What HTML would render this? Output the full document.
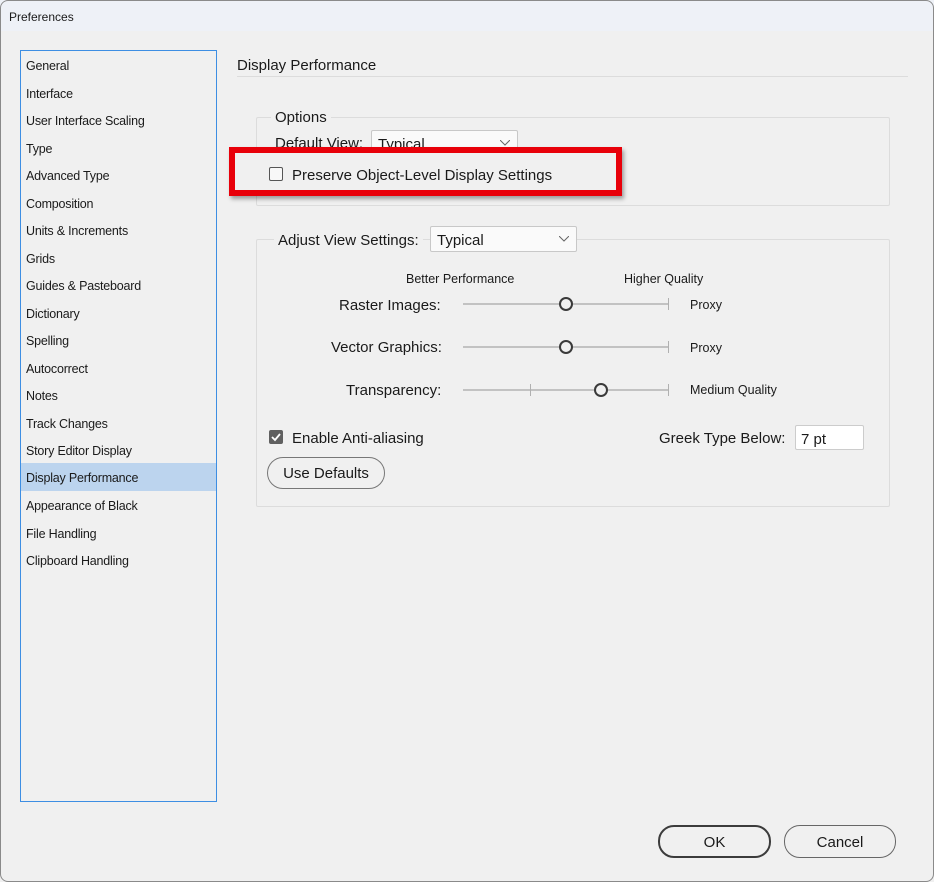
<!DOCTYPE html>
<html><head><style>
*{margin:0;padding:0;box-sizing:border-box}
body{width:934px;height:882px;background:#f0f0f0;font-family:"Liberation Sans",sans-serif;color:#1a1a1a;position:relative;overflow:hidden}
.win{position:absolute;left:0;top:0;width:934px;height:882px;background:#f0f0f0;overflow:hidden}
.frame{position:absolute;left:0;top:0;width:934px;height:882px;border:1px solid #8a8a8a;border-radius:8px;pointer-events:none}
.title{position:absolute;left:0;top:0;width:100%;height:31px;background:#eef1f7;font-size:12px;padding:10px 0 0 9px}
.a{position:absolute;white-space:nowrap}
.t{margin-top:1px}
.list{position:absolute;left:20px;top:50px;width:197px;height:752px;border:1px solid #3d8ee3;background:#f0f0f0}
.it{position:absolute;left:0;width:195px;height:27.5px;font-size:12.5px;line-height:27.5px;padding-left:5px;letter-spacing:-0.2px;padding-top:2px}
.sel{background:#bcd4ee}
.box{position:absolute;border:1px solid #dcdcdc;border-radius:2px}
.lg{position:absolute;background:#f0f0f0;padding:1px 4px 0;font-size:15px}
.dd{position:absolute;background:#fafafa;border:1px solid #c8c8c8;border-radius:2px;font-size:15px;padding:5px 0 0 6px}
.dd svg{position:absolute;right:7px;top:9px}
.tr{position:absolute;height:2px;background:#c2c2c2}
.kn{position:absolute;width:14px;height:14px;border:2.5px solid #3a3a3a;border-radius:50%;background:#f0f0f0}
.tk{position:absolute;width:1px;height:12px;background:#b0b0b0}
.btn{position:absolute;border:1px solid #5a5a5a;border-radius:16px;font-size:15px;text-align:center;background:#f0f0f0}
</style></head><body><div class="win">
<div class="title">Preferences</div>
<div class="list">
<div class="it" style="top:0px">General</div>
<div class="it" style="top:27.5px">Interface</div>
<div class="it" style="top:55px">User Interface Scaling</div>
<div class="it" style="top:82.5px">Type</div>
<div class="it" style="top:110px">Advanced Type</div>
<div class="it" style="top:137.5px">Composition</div>
<div class="it" style="top:165px">Units &amp; Increments</div>
<div class="it" style="top:192.5px">Grids</div>
<div class="it" style="top:220px">Guides &amp; Pasteboard</div>
<div class="it" style="top:247.5px">Dictionary</div>
<div class="it" style="top:275px">Spelling</div>
<div class="it" style="top:302.5px">Autocorrect</div>
<div class="it" style="top:330px">Notes</div>
<div class="it" style="top:357.5px">Track Changes</div>
<div class="it" style="top:385px">Story Editor Display</div>
<div class="it sel" style="top:412px">Display Performance</div>
<div class="it" style="top:440px">Appearance of Black</div>
<div class="it" style="top:467.5px">File Handling</div>
<div class="it" style="top:495px">Clipboard Handling</div>
</div>
<div class="a" style="left:237px;top:57px;font-size:15px">Display Performance</div>
<div class="a" style="left:237px;top:76px;width:671px;height:1px;background:#dcdcdc"></div>

<div class="box" style="left:256px;top:117px;width:634px;height:89px"></div>
<div class="lg" style="left:271px;top:108px">Options</div>
<div class="a" style="left:275px;top:135px;font-size:15px">Default View:</div>
<div class="dd" style="left:371px;top:130px;width:147px;height:26px">Typical<svg width="10" height="6"><path d="M0 0L5 5L10 0" fill="none" stroke="#666"/></svg></div>
<div class="a" style="left:229px;top:147px;width:393px;height:49px;border:6px solid #e8000a;box-shadow:2px 3px 4px rgba(0,0,0,.35);background:#f0f0f0"></div>
<div class="a" style="left:269px;top:167px;width:14px;height:14px;border:1px solid #555;border-radius:2px;background:#f8f8f8"></div>
<div class="a" style="left:292px;top:167px;font-size:15px">Preserve Object-Level Display Settings</div>

<div class="box" style="left:256px;top:239px;width:634px;height:268px"></div>
<div class="lg" style="left:274px;top:231px">Adjust View Settings:</div>
<div class="dd" style="left:430px;top:226px;width:147px;height:26px">Typical<svg width="10" height="6"><path d="M0 0L5 5L10 0" fill="none" stroke="#666"/></svg></div>
<div class="a" style="left:406px;top:272px;font-size:12.5px">Better Performance</div>
<div class="a" style="left:624px;top:272px;font-size:12.5px">Higher Quality</div>

<div class="a" style="left:339px;top:297px;font-size:15px">Raster Images:</div>
<div class="tr" style="left:463px;top:303px;width:206px"></div><div class="tk" style="left:668px;top:298px"></div>
<div class="kn" style="left:559px;top:297px"></div>
<div class="a" style="left:690px;top:298px;font-size:12.5px">Proxy</div>

<div class="a" style="left:331px;top:339px;font-size:15px">Vector Graphics:</div>
<div class="tr" style="left:463px;top:346px;width:206px"></div><div class="tk" style="left:668px;top:341px"></div>
<div class="kn" style="left:559px;top:340px"></div>
<div class="a" style="left:690px;top:341px;font-size:12.5px">Proxy</div>

<div class="a" style="left:346px;top:382px;font-size:15px">Transparency:</div>
<div class="tr" style="left:463px;top:389px;width:206px"></div><div class="tk" style="left:530px;top:384px"></div><div class="tk" style="left:668px;top:384px"></div>
<div class="kn" style="left:594px;top:383px"></div>
<div class="a" style="left:690px;top:383px;font-size:12.5px">Medium Quality</div>

<div class="a" style="left:269px;top:430px;width:14px;height:14px;background:#606060;border-radius:2px"><svg width="14" height="14" style="position:absolute;left:0;top:0"><path d="M3 7L6 10L11 4" fill="none" stroke="#fff" stroke-width="1.8"/></svg></div>
<div class="a" style="left:292px;top:430px;font-size:15px">Enable Anti-aliasing</div>
<div class="a" style="left:659px;top:430px;font-size:15px">Greek Type Below:</div>
<div class="a" style="left:795px;top:425px;width:69px;height:25px;background:#fff;border:1px solid #ccc;border-radius:2px;font-size:15px;padding:5px 0 0 5px">7 pt</div>
<div class="btn" style="left:267px;top:457px;width:118px;height:32px;line-height:32px;border-color:#777">Use Defaults</div>

<div class="btn" style="left:658px;top:825px;width:113px;height:33px;line-height:31px;border:2px solid #3c3c3c">OK</div>
<div class="btn" style="left:784px;top:825px;width:112px;height:33px;line-height:33px;border-color:#666">Cancel</div>
<div class="frame"></div>
</div></body></html>
